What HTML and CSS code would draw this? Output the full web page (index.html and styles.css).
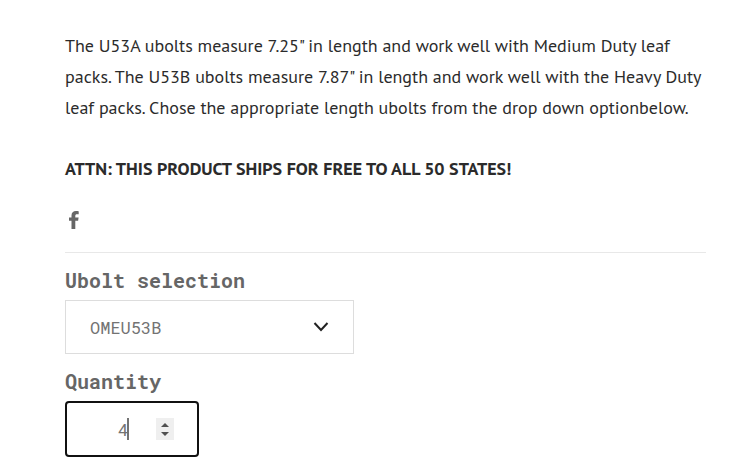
FILE: index.html
```
<!DOCTYPE html>
<html lang="en">

<head>
    <meta charset="utf-8">
    <meta name="viewport" content="width=device-width, initial-scale=1.0">
    <title>Ubolts</title>
    <link rel="stylesheet" href="styles.css">
</head>

<body>
    <main class="product">
        <section class="description">
            <p>The U53A ubolts measure 7.25" in length and work well with Medium Duty leaf packs. The U53B ubolts measure 7.87" in length and work well with the Heavy Duty leaf packs. Chose the appropriate length ubolts from the drop down optionbelow.</p>
            <p class="attention">ATTN: THIS PRODUCT SHIPS FOR FREE TO ALL 50 STATES!</p>
        </section>

        <nav class="share">
            <a href="#" aria-label="Facebook">
                <svg width="10" height="18" viewBox="0 0 10 18">
                    <path d="M2.500 18V9.800H0V6.500h2.500V4.400C2.500 1.600 4.200 0 6.900 0c1.200 0 2.400.2 2.800.3v3H8C6.700 3.300 6.300 3.900 6.300 4.800v1.700h3.300l-.5 3.300H6.300V18z" />
                </svg>
            </a>
        </nav>

        <form class="options">
            <label for="ubolt">Ubolt selection</label>
            <div class="field select-field">
                <select id="ubolt">
                    <option>OMEU53A</option>
                    <option selected>OMEU53B</option>
                </select>
                <svg class="arrow" width="16" height="10" viewBox="0 0 16 10">
                    <path d="M1.500 1L8 8l6.500-7" />
                </svg>
            </div>

            <label for="quantity">Quantity</label>
            <div class="field quantity-field">
                <input id="quantity" type="number" min="1" value="4">
                <span class="caret"></span>
                <svg class="stepper" width="18" height="22" viewBox="0 0 18 22">
                    <path d="M5 9l4-4 4 4zM5 14h8l-4 4z" />
                </svg>
            </div>
        </form>
    </main>
</body>

</html>
```

FILE: styles.css
```
* {
    box-sizing: border-box;
}

body {
    margin: 0;
    background-color: #fff;
    color: #2b2b2b;
    font-family: "PT Sans", "Noto Sans", sans-serif;
    font-size: 18px;
    line-height: 31px;
}

.product {
    padding: 30px 39px 0 65px;
}

.description p {
    margin: 0;
}

.description .attention {
    margin-top: 30px;
    font-weight: bold;
}

.share {
    padding: 27px 4px 23px;
}

.share a {
    display: block;
    width: 10px;
    height: 18px;
}

.share svg {
    display: block;
    fill: #666;
}

.options {
    display: flex;
    flex-direction: column;
    align-items: flex-start;
    border-top: 1px solid #e8e8e8;
    padding-top: 14px;
    color: #666;
    font-family: "Roboto Mono", "DejaVu Sans Mono", monospace;
}

.options label {
    font-size: 20px;
    font-weight: bold;
    line-height: 26px;
    margin-bottom: 7px;
}

.field {
    display: grid;
    align-items: center;
    max-width: 100%;
}

/* the icons share the cell of their control */
.field > * {
    grid-area: 1 / 1;
}

.select-field {
    width: 289px;
    margin-bottom: 14px;
}

.quantity-field {
    width: 134px;
}

.field select,
.field input {
    width: 100%;
    background-color: #fff;
    color: #737373;
    font-family: inherit;
    font-size: 17px;
}

.field select {
    appearance: none;
    height: 54px;
    padding: 0 24px;
    border: 1px solid #ddd;
    border-radius: 0;
}

.field input {
    height: 56px;
    padding: 0 23px;
    border: 2px solid #111;
    border-radius: 4px;
    outline: none;
    text-align: center;
}

.field input::-webkit-inner-spin-button {
    appearance: none;
    width: 18px;
    height: 22px;
    margin: 0;
    opacity: 0;
}

.arrow,
.stepper {
    justify-self: end;
    margin-right: 25px;
    pointer-events: none;
}

.arrow {
    fill: none;
    stroke: #222;
    stroke-width: 2;
}

.stepper {
    background-color: #efefef;
    fill: #505050;
}

.caret {
    width: 2px;
    height: 22px;
    margin-left: 62px;
    background-color: #737373;
    pointer-events: none;
}
```
